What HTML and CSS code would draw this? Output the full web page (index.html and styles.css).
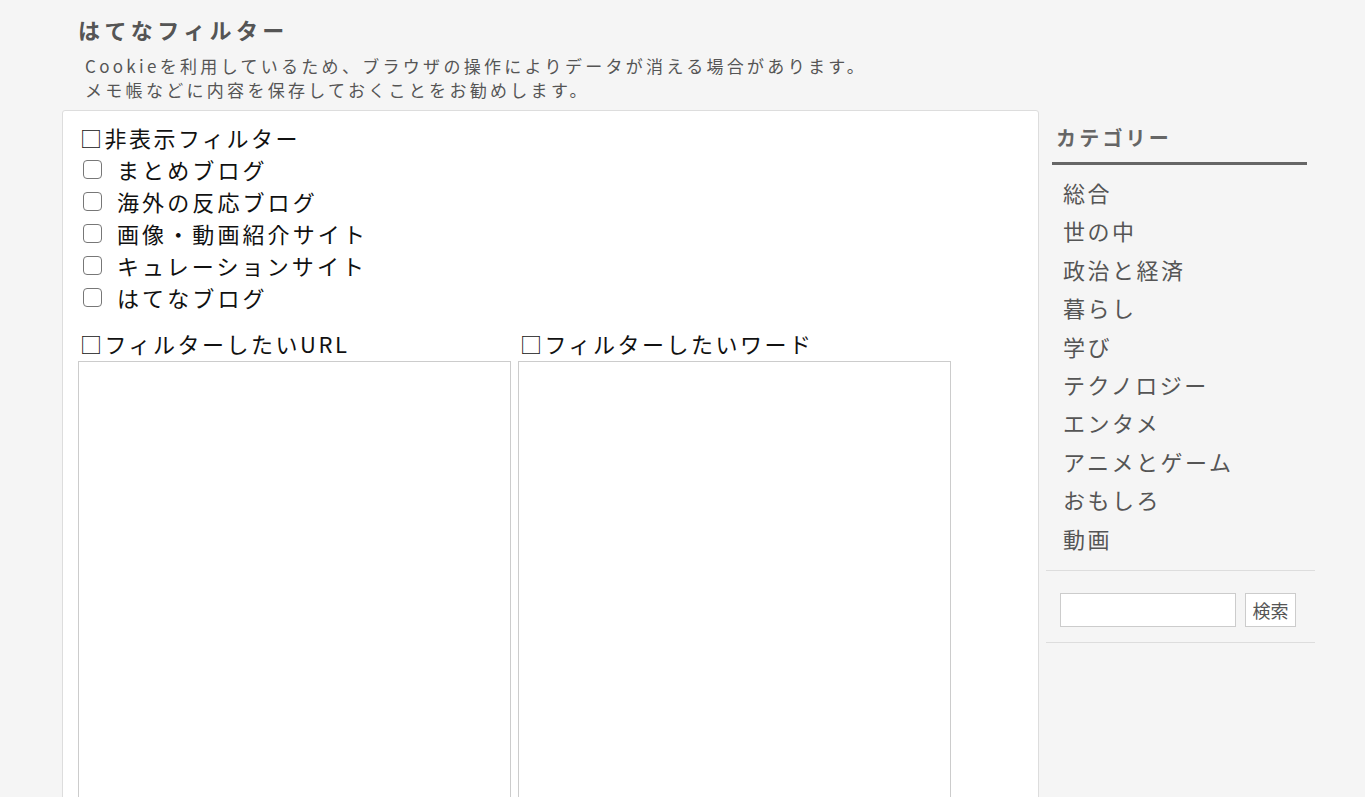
FILE: index.html
```html
<!DOCTYPE html>
<html lang="ja">
<head>
<meta charset="utf-8">
<title>はてなフィルター</title>
<link rel="stylesheet" href="styles.css">
</head>
<body>
<div class="page">
  <header class="header">
    <h1 class="title">はてなフィルター</h1>
    <p class="note">Cookieを利用しているため、ブラウザの操作によりデータが消える場合があります。<br>メモ帳などに内容を保存しておくことをお勧めします。</p>
  </header>
  <div class="layout">
    <main class="main">
      <div class="section-title">□非表示フィルター</div>
      <ul class="checks">
        <li><label><input type="checkbox"><span>まとめブログ</span></label></li>
        <li><label><input type="checkbox"><span>海外の反応ブログ</span></label></li>
        <li><label><input type="checkbox"><span>画像・動画紹介サイト</span></label></li>
        <li><label><input type="checkbox"><span>キュレーションサイト</span></label></li>
        <li><label><input type="checkbox"><span>はてなブログ</span></label></li>
      </ul>
      <div class="areas">
        <div class="area">
          <div class="section-title">□フィルターしたいURL</div>
          <textarea class="box"></textarea>
        </div>
        <div class="area">
          <div class="section-title">□フィルターしたいワード</div>
          <textarea class="box"></textarea>
        </div>
      </div>
    </main>
    <aside class="side">
      <h2 class="side-title">カテゴリー</h2>
      <ul class="cats">
        <li>総合</li>
        <li>世の中</li>
        <li>政治と経済</li>
        <li>暮らし</li>
        <li>学び</li>
        <li>テクノロジー</li>
        <li>エンタメ</li>
        <li>アニメとゲーム</li>
        <li>おもしろ</li>
        <li>動画</li>
      </ul>
      <form class="search">
        <input type="text" class="search-input">
        <button type="button" class="search-btn">検索</button>
      </form>
    </aside>
  </div>
</div>
</body>
</html>
```

FILE: styles.css
```css
html, body {
  margin: 0;
  padding: 0;
  background: #f5f5f5;
  font-family: "Noto Sans CJK JP", "Noto Sans", sans-serif;
  color: #222;
  height: 797px;
  overflow: hidden;
}
.page {
  padding-left: 62px;
  width: 1253px;
}
.header {
  padding-left: 16px;
  padding-top: 13px;
  height: 110px;
  box-sizing: border-box;
}
.title {
  margin: 0;
  font-size: 22px;
  line-height: 32px;
  font-weight: bold;
  letter-spacing: 4.4px;
  color: #555;
}
.note {
  margin: 9px 0 0 7px;
  font-size: 17px;
  line-height: 24px;
  letter-spacing: 3.3px;
  color: #555;
}
.layout {
  display: flex;
  gap: 7px;
  align-items: flex-start;
}
.main {
  width: 977px;
  box-sizing: border-box;
  background: #fff;
  border: 1px solid #ddd;
  border-radius: 3px;
  padding: 10px 15px 0;
  height: 720px;
}
.section-title {
  font-size: 22px;
  line-height: 32px;
  letter-spacing: 2.5px;
  padding-left: 2px;
  color: #111;
}
.checks {
  list-style: none;
  margin: 0 0 14px;
  padding: 0;
}
.checks li {
  font-size: 22px;
  line-height: 32px;
  letter-spacing: 3.1px;
  color: #111;
}
.checks label {
  display: flex;
  align-items: center;
}
.checks input {
  appearance: none;
  -webkit-appearance: none;
  width: 19px;
  height: 19px;
  box-sizing: border-box;
  border: 1.5px solid #777;
  border-radius: 4px;
  background: #fff;
  margin: 0 15px 0 5px;
}
.areas {
  display: flex;
  gap: 7px;
}
.area {
  display: flex;
  flex-direction: column;
}
.box {
  width: 433px;
  height: 500px;
  box-sizing: border-box;
  border: 1px solid #ccc;
  resize: none;
  margin: 2px 0 0;
  display: block;
}
.side {
  width: 269px;
  padding-top: 14px;
}
.side-title {
  margin: 0 8px 0 6px;
  font-size: 20px;
  line-height: 28px;
  font-weight: bold;
  letter-spacing: 3.2px;
  color: #666;
  padding: 0 0 10px 4px;
  border-bottom: 3px solid #666;
}
.cats {
  list-style: none;
  margin: 8px 0 0;
  padding: 0 0 13px 17px;
  border-bottom: 1px solid #ddd;
}
.cats li {
  font-size: 22px;
  line-height: 38.4px;
  letter-spacing: 2.5px;
  color: #555;
}
.search {
  display: flex;
  align-items: center;
  gap: 9px;
  padding: 22px 0 15px 14px;
  border-bottom: 1px solid #ddd;
}
.search-input {
  width: 176px;
  height: 34px;
  box-sizing: border-box;
  border: 1px solid #ccc;
  background: #fff;
  margin: 0;
}
.search-btn {
  width: 51px;
  height: 34px;
  box-sizing: border-box;
  border: 1px solid #ccc;
  background: #fff;
  color: #555;
  font-family: "Noto Sans CJK JP", sans-serif;
  font-size: 18px;
  padding: 0;
  margin: 0;
}
```
